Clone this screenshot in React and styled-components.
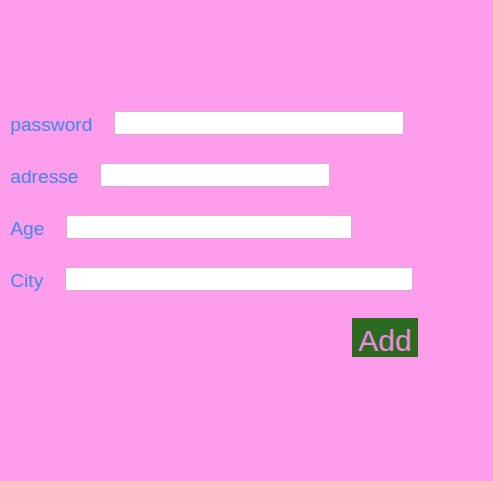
import styled, { createGlobalStyle } from "styled-components";

const GlobalStyle = createGlobalStyle`
  html, body {
    margin: 0;
    padding: 0;
    background: #ff9ded;
    font-family: "Liberation Sans", Arial, sans-serif;
  }
`;

const Page = styled.div`
  min-height: 481px;
  background: #ff9ded;
`;

const Form = styled.form`
  display: flex;
  flex-direction: column;
  padding: 111px 0 0 10px;
`;

const Row = styled.div`
  display: flex;
  align-items: center;
  height: 24px;
  margin-bottom: 28px;
`;

const Label = styled.label`
  color: #4a86ea;
  font-size: 19.2px;
  margin-right: 22px;
  line-height: 24px;
  padding-top: 4px;
`;

const Input = styled.input`
  box-sizing: border-box;
  width: ${({ $w }) => $w}px;
  height: 24px;
  border: 1px solid #dcaad0;
  border-radius: 2px;
  background: #fff;
  margin: 0;
  padding: 0 4px;
  outline: none;
`;

const ButtonRow = styled.div`
  display: flex;
  padding-left: 342px;
  margin-top: -1px;
`;

const AddButton = styled.button`
  width: 66px;
  height: 39px;
  border: none;
  border-radius: 0;
  background: #2c6a20;
  color: #ee8be2;
  font-family: "Liberation Sans", Arial, sans-serif;
  font-size: 30px;
  line-height: 30px;
  padding: 7px 0 0;
  cursor: pointer;
`;

const fields = [
  { id: "password", label: "password", width: 290 },
  { id: "adresse", label: "adresse", width: 230 },
  { id: "age", label: "Age", width: 286 },
  { id: "city", label: "City", width: 348 },
];

export default function App() {
  return (
    <Page>
      <GlobalStyle />
      <Form onSubmit={(e) => e.preventDefault()}>
        {fields.map((f) => (
          <Row key={f.id}>
            <Label htmlFor={f.id}>{f.label}</Label>
            <Input id={f.id} $w={f.width} />
          </Row>
        ))}
        <ButtonRow>
          <AddButton type="submit">Add</AddButton>
        </ButtonRow>
      </Form>
    </Page>
  );
}
